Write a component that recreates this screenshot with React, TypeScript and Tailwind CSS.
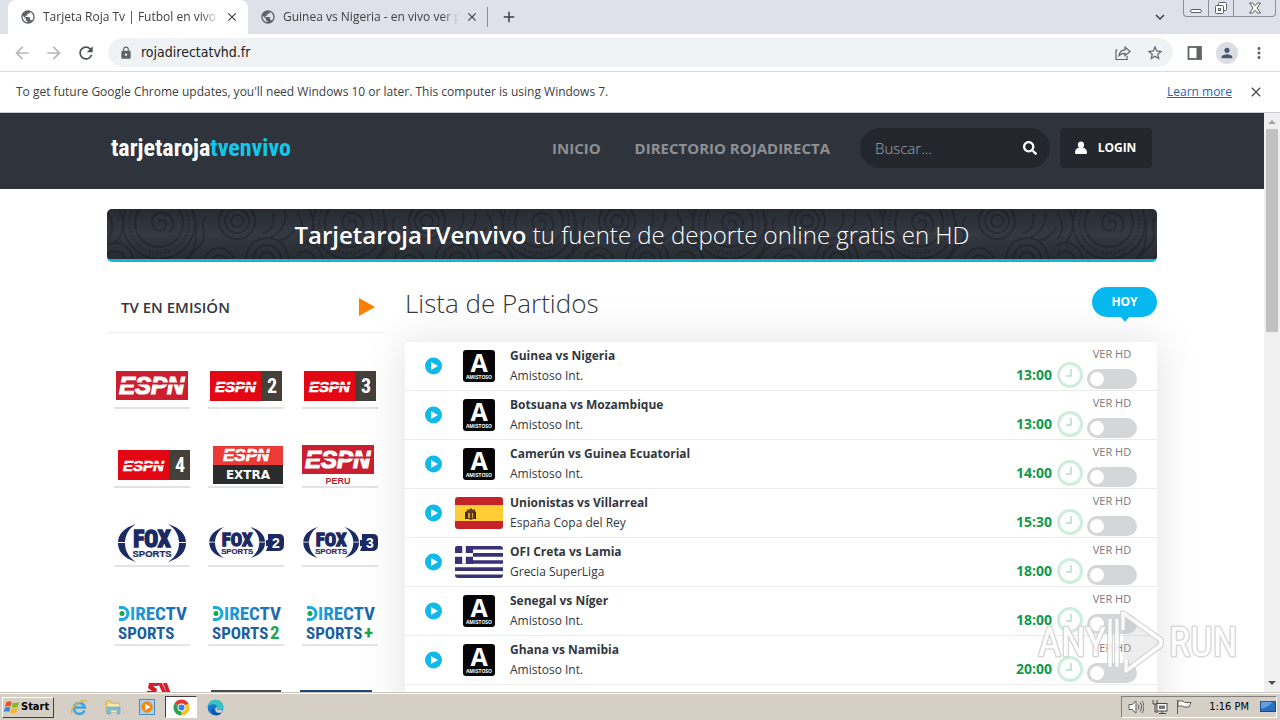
import React from "react";
import {
  MdPublic, MdClose, MdAdd, MdArrowBack, MdArrowForward, MdRefresh, MdLock,
  MdStarBorder, MdMoreVert, MdPerson, MdKeyboardArrowDown,
} from "react-icons/md";
import { FaSearch } from "react-icons/fa";

const UI = "font-['DejaVu_Sans_Condensed','Open_Sans',sans-serif]";
const CONDENSED = "Roboto Condensed, Liberation Sans Narrow, sans-serif";

function Tab({ title, active }: { title: string; active?: boolean }) {
  return (
    <div
      className={
        active
          ? "flex h-full w-[240px] items-center rounded-t-lg bg-white pr-2 pl-3"
          : "flex h-full w-[240px] items-center pr-2 pl-3"
      }
    >
      <MdPublic className="size-4 shrink-0 text-[#5f6368]" />
      <span className="ml-[7px] flex-1 overflow-hidden mask-r-from-90% font-['Open_Sans',sans-serif] text-[12px] whitespace-nowrap text-[#3c4043]">
        {title}
      </span>
      <button aria-label="Close tab" className="ml-[5px] flex size-4 items-center justify-center text-[#3c4043]">
        <MdClose className="size-[14px]" />
      </button>
    </div>
  );
}

function TabStrip() {
  return (
    <div className="flex h-[34px] shrink-0 bg-[#dee1e9]">
      <div className="flex items-center pl-2">
        <Tab title="Tarjeta Roja Tv | Futbol en vivo – Pirlo" active />
        <Tab title="Guinea vs Nigeria - en vivo ver partido" />
        <span className="-ml-px h-5 w-px bg-[#8a8d93]" />
        <button aria-label="New tab" className="ml-3 text-[#3c4043]">
          <MdAdd className="size-[18px]" />
        </button>
      </div>
      <div className="ml-auto flex items-start pr-1">
        <button aria-label="Search tabs" className="mt-2 mr-[14px] text-[#3c4043]">
          <MdKeyboardArrowDown className="size-[18px]" />
        </button>
        <div className="flex h-[17px] rounded-b border border-t-0 border-[#8b8e95] text-[#5b5f66]">
          <button aria-label="Minimize" className="flex w-[25px] items-end justify-center border-r border-[#8b8e95] pb-[3px]">
            <span className="h-1 w-3 rounded-xs border border-[#5b5f66] bg-white" />
          </button>
          <button aria-label="Restore" className="flex w-[25px] items-center justify-center border-r border-[#8b8e95]">
            <svg viewBox="0 0 14 14" className="size-[14px]" fill="#fff" stroke="#5b5f66">
              <rect x="4.500" y="1.500" width="8" height="8" rx="1" />
              <rect x="1.500" y="4.500" width="8" height="8" rx="1" />
              <rect x="4.500" y="7.500" width="2" height="2" />
            </svg>
          </button>
          <button aria-label="Close" className="flex w-[41px] items-center justify-center">
            <svg viewBox="0 0 14 12" className="h-3 w-[14px]" fill="#fff" stroke="#5b5f66">
              <path d="M1.500 1h3.200L7 3.800 9.300 1h3.200L9 6l3.500 5H9.300L7 8.200 4.700 11H1.500L5 6z" />
            </svg>
          </button>
        </div>
      </div>
    </div>
  );
}

function Toolbar() {
  return (
    <div className="flex h-[38px] shrink-0 items-center border-b border-[#d9dbdf] bg-white pr-3 pl-3">
      <button aria-label="Back" className="text-[#b4b6b9]"><MdArrowBack className="size-5" /></button>
      <button aria-label="Forward" className="ml-3 text-[#b4b6b9]"><MdArrowForward className="size-5" /></button>
      <button aria-label="Reload" className="ml-3 text-[#4c4f54]"><MdRefresh className="size-5" /></button>
      <div className="ml-3 flex h-[29px] flex-1 items-center rounded-full bg-[#f0f3f6] pr-[9px] pl-[11px]">
        <MdLock className="size-[14px] text-[#5f6368]" />
        <input
          aria-label="Address"
          defaultValue="rojadirectatvhd.fr"
          className="ml-2 flex-1 bg-transparent text-[14px] text-[#202124] outline-none"
        />
        <button aria-label="Share">
          <svg viewBox="0 0 18 18" className="size-[18px]" fill="none" stroke="#5f6368" strokeWidth="1.200">
            <path d="M3.500 6H2v9.500h11V12" />
            <path d="M5 11.500c.4-3.500 2.500-5.500 6-5.700V3l5 4.500-5 4.300V9.300c-2.600 0-4.500.6-6 2.200z" />
          </svg>
        </button>
        <button aria-label="Bookmark" className="ml-[14px] text-[#5f6368]"><MdStarBorder className="size-[18px]" /></button>
      </div>
      <button aria-label="Side panel" className="ml-[13px]">
        <svg viewBox="0 0 18 18" className="size-[18px]" fill="none" stroke="#5f6368" strokeWidth="1.800">
          <rect x="2.500" y="3" width="12.500" height="12" />
          <path d="M12.500 3v12" strokeWidth="4" />
        </svg>
      </button>
      <button aria-label="Profile" className="ml-3 flex size-[22px] items-center justify-center rounded-full bg-[#dadde2] text-[#4d5670]">
        <MdPerson className="size-4" />
      </button>
      <button aria-label="Menu" className="ml-3 text-[#5f6368]"><MdMoreVert className="size-[18px]" /></button>
    </div>
  );
}

function InfoBar() {
  return (
    <div className="flex h-[41px] shrink-0 items-center border-b border-[#c9ccd0] bg-white px-4 font-['Open_Sans',sans-serif] text-[12px] text-[#3c4043]">
      <p>To get future Google Chrome updates, you'll need Windows 10 or later. This computer is using Windows 7.</p>
      <a href="#learn" className="ml-auto text-[#1a66b8] underline">Learn more</a>
      <button aria-label="Dismiss" className="ml-4 text-[#4c4f54]"><MdClose className="size-4" /></button>
    </div>
  );
}

function SiteHeader() {
  return (
    <header className="border-t border-[#2a2f36] bg-[#2f333b]">
      <div className="mx-auto flex h-[75px] max-w-[1050px] items-center pr-[5px] pb-[7px] pl-1">
        <a href="#home" className="font-['Roboto_Condensed','Liberation_Sans_Narrow',sans-serif] text-[24px] leading-9 font-bold text-white">
          tarjetaroja<span className="text-[#0fc9ec]">tvenvivo</span>
        </a>
        <nav className="ml-auto flex gap-[34px] text-[15px] font-bold text-[#8d9095]">
          <a href="#inicio">INICIO</a>
          <a href="#directorio">DIRECTORIO ROJADIRECTA</a>
        </nav>
        <form className="ml-[30px] flex h-10 w-[190px] items-center rounded-full bg-[#23262d] pr-[13px] pl-[15px]">
          <input
            aria-label="Buscar"
            placeholder="Buscar..."
            className="w-0 flex-1 bg-transparent text-[15px] font-light text-white outline-none placeholder:text-[#a4a6aa]"
          />
          <button type="button" aria-label="Buscar partidos" className="text-white"><FaSearch className="size-[14px]" /></button>
        </form>
        <button className="ml-[10px] flex h-10 w-[92px] items-center justify-center gap-[10px] rounded bg-[#23262d] pr-[2px] text-[12px] font-bold text-white">
          <svg viewBox="0 0 14 14" className="size-[14px]" fill="currentColor">
            <path d="M7 .5c2 0 3.100 1.400 3.100 3.200 0 1.200-.5 2.300-1.200 3 2.600.5 4.100 2 4.100 4.800 0 1-.6 1.500-1.500 1.500h-9C1.600 13 1 12.500 1 11.500c0-2.800 1.500-4.300 4.100-4.800-.7-.7-1.200-1.800-1.200-3C3.900 1.900 5 .5 7 .5z" />
          </svg>
          LOGIN
        </button>
      </div>
    </header>
  );
}

function Swirls() {
  return (
    <svg className="absolute inset-0 size-full" aria-hidden="true">
      <defs>
        <pattern id="swirl" width="190" height="60" patternUnits="userSpaceOnUse">
          <g fill="none" stroke="#292d34" strokeWidth="2">
            <circle cx="52" cy="14" r="24" />
            <circle cx="52" cy="14" r="30" strokeDasharray="2 2" />
            <circle cx="52" cy="14" r="36" />
            <path d="M52 14c0-4 7-4 7 2s-10 8-13 1 2-15 11-13 12 13 6 19" />
            <circle cx="130" cy="12" r="6" />
            <circle cx="130" cy="12" r="12" />
            <circle cx="130" cy="12" r="18" />
            <circle cx="112" cy="54" r="8" />
            <circle cx="112" cy="54" r="15" />
            <circle cx="160" cy="50" r="7" />
            <circle cx="160" cy="50" r="14" />
            <circle cx="160" cy="50" r="21" />
            <circle cx="8" cy="52" r="10" />
            <circle cx="8" cy="52" r="18" />
            <path d="M0 30c8-8 6-18 0-26M8 34c10-10 10-24 4-34M82 52c0-8 10-12 14-20s-4-14 2-24M74 60c2-10 12-14 14-24s0-16 2-24M156 24c8-2 12-10 10-20M164 28c10-4 16-14 14-26M172 32c8-2 14-8 18-14" />
          </g>
        </pattern>
      </defs>
      <rect width="100%" height="100%" fill="url(#swirl)" />
    </svg>
  );
}

function Banner() {
  return (
    <div className="relative flex h-[53px] items-center justify-center overflow-hidden rounded-[5px] border-b-3 border-[#13b5e0] bg-[#343942]">
      <Swirls />
      <div className="absolute inset-0 bg-linear-to-b from-black/25 via-transparent to-black/25" />
      <h1 className="relative pt-px text-[24px] font-light text-white">
        <strong className="font-semibold">TarjetarojaTVenvivo</strong> tu fuente de deporte online gratis en HD
      </h1>
    </div>
  );
}

function EspnMark({ x, y, size, stripe }: { x: number; y: number; size: number; stripe: string }) {
  return (
    <g>
      <text x={x} y={y} fontSize={size} fontWeight="bold" fontStyle="italic" fill="#fff" stroke="#fff" strokeWidth={size > 20 ? 1.2 : 0.7} fontFamily="Liberation Sans, sans-serif">
        ESPN
      </text>
      <rect x={x - 1} y={y - size * 0.48} width={size * 2.9} height={size > 20 ? 2 : 1.3} fill={stripe} />
    </g>
  );
}

function EspnNumber({ n, dx }: { n: string; dx: number }) {
  return (
    <g transform={`translate(${dx} 0)`}>
      <rect x="2" y="22" width="52" height="30" fill="#e30613" />
      <rect x="53" y="22" width="21" height="30" fill="#46403b" />
      <EspnMark x={7} y={43} size={15} stripe="#e30613" />
      <text x="64" y="44" fontSize="20" fontWeight="bold" textAnchor="middle" fill="#fff" fontFamily={CONDENSED}>{n}</text>
    </g>
  );
}

function FoxMark({ n }: { n?: string }) {
  const mark = (
    <g>
      <g fill="#1b2a63">
        <path d="M22 17C9 21 4 28 4 36s5 15 18 19C14 50 11 43 11 36s3-14 11-19z" />
        <path d="M54 17c13 4 18 11 18 19s-5 15-18 19c8-5 11-12 11-19s-3-14-11-19z" />
      </g>
      <path d="M3 35.500h8M65 35.500h8" stroke="#fff" />
      <text x="38" y="40" fontSize="23" fontWeight="bold" textAnchor="middle" fill="#1b2a63" stroke="#1b2a63" strokeWidth="1.600" fontFamily={CONDENSED}>FOX</text>
      <text x="38" y="49.500" fontSize="9.500" fontWeight="bold" textAnchor="middle" fill="#1b2a63" stroke="#1b2a63" strokeWidth=".2" fontFamily="Liberation Sans, sans-serif">SPORTS</text>
    </g>
  );
  if (!n) return mark;
  return (
    <g>
      <g transform="translate(-2 6) scale(.82)">{mark}</g>
      <path d="M60 27h11q5 0 5 5v6q0 6-6 6H58l2-5h-2v-6h2z" fill="#1b2a63" />
      <text x="68" y="41" fontSize="14" fontWeight="bold" textAnchor="middle" fill="#fff" fontFamily="Liberation Sans, sans-serif">{n}</text>
    </g>
  );
}

function DirectvMark({ extra }: { extra?: string }) {
  return (
    <g fontFamily={CONDENSED} fontWeight="bold">
      <defs>
        <linearGradient id="dtv" x1="0" x2="1">
          <stop offset="0" stopColor="#16a5e0" />
          <stop offset="1" stopColor="#1c5fa8" />
        </linearGradient>
      </defs>
      <path d="M5 21.500h3a6 6 0 0 1 0 12H5" fill="none" stroke="#19a9e4" strokeWidth="3" />
      <circle cx="8" cy="27.500" r="2.500" fill="#1aa64a" />
      <text x="16" y="34" fontSize="19" fill="url(#dtv)">IRECTV</text>
      <text x="4" y="53" fontSize="17" fill="#1c5fa0">SPORTS</text>
      {extra && <text x="62" y="53" fontSize="19" fill="#1aa64a">{extra}</text>}
    </g>
  );
}

const channels: { name: string; art: React.ReactNode }[] = [
  { name: "ESPN", art: <g><rect x="2" y="22" width="72" height="29" fill="#cb1f30" /><EspnMark x={5} y={45} size={24} stripe="#cb1f30" /></g> },
  { name: "ESPN 2", art: <EspnNumber n="2" dx={0} /> },
  { name: "ESPN 3", art: <EspnNumber n="3" dx={0} /> },
  { name: "ESPN 4", art: <EspnNumber n="4" dx={2} /> },
  {
    name: "ESPN Extra",
    art: (
      <g>
        <rect x="5" y="18" width="70" height="19" fill="#ec3a36" />
        <rect x="5" y="37" width="70" height="19" fill="#2a2b2c" />
        <EspnMark x={15} y={33} size={17} stripe="#ec3a36" />
        <text x="40" y="51" fontSize="12" fontWeight="bold" textAnchor="middle" fill="#fff" fontFamily="DejaVu Sans, sans-serif">EXTRA</text>
      </g>
    ),
  },
  {
    name: "ESPN Peru",
    art: (
      <g>
        <rect x="0" y="17" width="72" height="29" fill="#cb1f30" />
        <EspnMark x={3} y={40} size={24} stripe="#cb1f30" />
        <text x="36" y="56" fontSize="9" fontWeight="bold" textAnchor="middle" fill="#b81f2d" fontFamily="Liberation Sans, sans-serif">PERU</text>
      </g>
    ),
  },
  { name: "Fox Sports", art: <FoxMark /> },
  { name: "Fox Sports 2", art: <FoxMark n="2" /> },
  { name: "Fox Sports 3", art: <FoxMark n="3" /> },
  { name: "DirecTV Sports", art: <DirectvMark /> },
  { name: "DirecTV Sports 2", art: <DirectvMark extra="2" /> },
  { name: "DirecTV Sports Plus", art: <DirectvMark extra="+" /> },
  { name: "Canal 13", art: <path d="M35 18h10l-1 3h-5l4 3-1 5h-10l1-3h5l-4-3zM44 18h4l5 11h-4zM49 18h4l4 11h-4zM32 28l3-3v4z" fill="#d81e2c" /> },
  { name: "Canal 14", art: <rect x="3" y="25" width="70" height="20" fill="#4a4d55" /> },
  { name: "Canal 15", art: <rect x="-2" y="25" width="72" height="20" fill="#243f86" /> },
];

function Sidebar() {
  return (
    <aside className="w-[276px] shrink-0">
      <div className="flex h-[51px] items-center justify-between border-b border-[#f0f0f0] pr-2 pl-[14px]">
        <h2 className="text-[15px] font-semibold text-[#33373d]">TV EN EMISIÓN</h2>
        <svg viewBox="0 0 16 18" className="h-[18px] w-4" fill="#ff7e00"><path d="M0 0l16 9-16 9z" /></svg>
      </div>
      <div className="mt-4 grid grid-cols-[repeat(3,76px)] gap-x-[18px] gap-y-[19px] pl-[7px]">
        {channels.map((c) => (
          <a key={c.name} href="#canal" aria-label={c.name} className="h-[60px] border-b-2 border-[#e2e3e4]">
            <svg viewBox="0 0 76 59" className="h-[59px] w-[76px] overflow-visible">{c.art}</svg>
          </a>
        ))}
      </div>
    </aside>
  );
}

type Kind = "am" | "es" | "gr";
const matches: { title: string; league: string; time: string; kind: Kind }[] = [
  { title: "Guinea vs Nigeria", league: "Amistoso Int.", time: "13:00", kind: "am" },
  { title: "Botsuana vs Mozambique", league: "Amistoso Int.", time: "13:00", kind: "am" },
  { title: "Camerún vs Guinea Ecuatorial", league: "Amistoso Int.", time: "14:00", kind: "am" },
  { title: "Unionistas vs Villarreal", league: "España Copa del Rey", time: "15:30", kind: "es" },
  { title: "OFI Creta vs Lamia", league: "Grecia SuperLiga", time: "18:00", kind: "gr" },
  { title: "Senegal vs Níger", league: "Amistoso Int.", time: "18:00", kind: "am" },
  { title: "Ghana vs Namibia", league: "Amistoso Int.", time: "20:00", kind: "am" },
];

function Badge({ kind }: { kind: Kind }) {
  if (kind === "am")
    return (
      <svg viewBox="0 0 32 32" className="size-8">
        <rect width="32" height="32" rx="3" fill="#050505" />
        <text x="16" y="22" fontSize="25" fontWeight="bold" textAnchor="middle" fill="#fff" fontFamily="Open Sans, sans-serif">A</text>
        <text x="16" y="29" fontSize="5" fontWeight="bold" textAnchor="middle" fill="#fff" fontFamily="Open Sans, sans-serif">AMISTOSO</text>
      </svg>
    );
  if (kind === "es")
    return (
      <svg viewBox="0 0 48 32" className="h-8 w-12 rounded-[3px]">
        <rect width="48" height="32" fill="#c62328" />
        <rect y="8" width="48" height="16" fill="#ffcd34" />
        <path d="M10 22v-7l2-1v-2l2 1 2-2 2 2 2-1v2l1 1v7h-3l-2 1-2-1z" fill="#5d3a1c" />
        <path d="M13 16h2v5h-2zM17 16h1v5h-1z" fill="#d89a2c" />
        <path d="M11 15v7M20.500 15v7" stroke="#2b2118" />
      </svg>
    );
  return (
    <svg viewBox="0 0 48 32" className="h-8 w-12 rounded-[3px]">
      <rect width="48" height="32" fill="#fff" />
      <path d="M0 1.800h48M0 8.900h48M0 16h48M0 23.100h48M0 30.200h48" stroke="#37317a" strokeWidth="3.600" />
      <rect width="18" height="17.800" fill="#37317a" />
      <path d="M9 0v17.800M0 8.900h18" stroke="#fff" strokeWidth="3.600" />
    </svg>
  );
}

function MatchRow({ title, league, time, kind, id }: (typeof matches)[number] & { id: string }) {
  return (
    <li className="flex h-[49px] items-center border-b border-[#ebebeb] pr-5 pl-5">
      <svg viewBox="0 0 18 18" className="size-[18px] shrink-0">
        <circle cx="8.500" cy="9" r="8.500" fill="#10b9e6" />
        <path d="M6 5l7 4-7 4z" fill="#fff" />
      </svg>
      <span className="ml-3 flex w-12 shrink-0 justify-center"><Badge kind={kind} /></span>
      <div className="ml-[7px] flex-1 text-[12px] leading-5 text-[#33373d]">
        <a href="#partido" className="block font-bold">{title}</a>
        <span className="block">{league}</span>
      </div>
      <time className="pt-[18px] text-[14px] leading-5 font-bold text-[#109a4c]">{time}</time>
      <svg viewBox="0 0 26 26" className="mt-[17px] ml-[5px] size-[26px]" fill="none">
        <circle cx="13" cy="13" r="11.500" stroke="#cdeedb" strokeWidth="3" />
        <path d="M14 7v7H9" stroke="#b5dcc6" strokeWidth="1.500" />
      </svg>
      <div className="ml-1 flex w-[50px] flex-col items-center pt-px">
        <label htmlFor={id} className="text-[11px] leading-5 text-[#77797d]">VER HD</label>
        <input
          id={id}
          type="checkbox"
          className="mt-[5px] h-5 w-[50px] appearance-none rounded-full bg-[#d5d6d7] before:mt-[3px] before:ml-[3px] before:block before:size-[14px] before:rounded-full before:bg-white"
        />
      </div>
    </li>
  );
}

function MatchList() {
  return (
    <section className="min-w-0 flex-1">
      <div className="flex h-[60px] items-start justify-between pt-[5px]">
        <h2 className="text-[26px] leading-8 font-light text-[#33373d]">Lista de Partidos</h2>
        <button className="relative h-[30px] w-[65px] rounded-full bg-[#06b8f0] text-[12px] font-bold text-white">
          HOY
          <span className="absolute top-[29px] left-[28px] border-x-5 border-t-6 border-x-transparent border-t-[#06b8f0]" />
        </button>
      </div>
      <ul className="rounded bg-white pb-12 shadow-[0_0_45px_rgba(0,0,0,0.12)]">
        {matches.map((m, i) => (
          <MatchRow key={m.title} {...m} id={`hd-${i}`} />
        ))}
      </ul>
    </section>
  );
}

function Watermark() {
  return (
    <svg viewBox="0 0 200 76" className="pointer-events-none absolute right-[42px] bottom-[10px] h-[76px] w-[200px]" fontFamily={CONDENSED}>
      <g opacity=".85" strokeLinejoin="round">
        <g stroke="#d2d3d4" strokeWidth="3" fill="none">
          <text x="0" y="50" fontSize="40">ANY</text>
          <text x="131" y="50" fontSize="40">RUN</text>
        </g>
        <g fill="#fff">
          <text x="0" y="50" fontSize="40">ANY</text>
          <text x="131" y="50" fontSize="40">RUN</text>
        </g>
        <path d="M85 6v60l38-30z" fill="#b9babb" fillOpacity=".3" />
        <path d="M85 24V7l38 27v5L88 65V54M72 13v48M79 13v48" fill="none" stroke="#cfd0d1" strokeWidth="6" />
        <path d="M85 24V7l38 27v5L88 65V54M72 13v48M79 13v48" fill="none" stroke="#fff" strokeWidth="3.500" />
      </g>
    </svg>
  );
}

function Scrollbar() {
  return (
    <div className="flex w-4 shrink-0 flex-col items-center bg-[#f0f0f0]">
      <svg viewBox="0 0 16 16" className="size-4" fill="#a3a3a3"><path d="M4 11l4-4 4 4z" /></svg>
      <div className="h-[35%] w-3 bg-[#c1c1c1]" />
      <svg viewBox="0 0 16 16" className="mt-auto size-4" fill="#505050"><path d="M4 5l4 4 4-4z" /></svg>
    </div>
  );
}

function Taskbar() {
  return (
    <footer className="flex h-7 shrink-0 items-center border-t border-[#c9c5be] bg-[#d5cfc6] pt-px pr-[3px] pl-[2px] shadow-[inset_0_1px_0_#fff]">
      <button className="flex h-[21px] w-[52px] items-center gap-px border border-t-white border-r-[#404040] border-b-[#404040] border-l-white pl-px text-[11px] font-bold text-black">
        <svg viewBox="0 0 16 16" className="size-4 shrink-0">
          <path d="M2 3.500C4 2 6 2 7.700 3L6.600 7.500C5 6.600 3 6.600 1 8z" fill="#e8542a" />
          <path d="M8.700 3.400c2 1 4 1 6.300-.4L14 7.500c-2 1.400-4 1.400-6.300.5z" fill="#7fba2c" />
          <path d="M.8 9C2.600 7.600 4.600 7.600 6.300 8.500L5.200 13C3.600 12 1.700 12-.2 13.400z" fill="#3b87d6" />
          <path d="M7.400 9c2 1 4 1 6.300-.4l-1.100 4.500c-2 1.400-4 1.400-6.300.4z" fill="#fbb91c" />
        </svg>
        Start
      </button>
      <div className="ml-[9px] flex items-center gap-[2px]">
        <button aria-label="Internet Explorer" className="flex h-[22px] w-8 items-center justify-center">
          <svg viewBox="0 0 18 18" className="size-[18px]" fill="none">
            <path d="M14.500 12.500A5.500 5.500 0 1 1 14.800 9.500H5" stroke="#3fa5e2" strokeWidth="2.600" />
            <path d="M2 15.500c-2-2 1-7 5.500-10S16.500 1 16.500 4" stroke="#e9b83a" strokeWidth="1.400" />
          </svg>
        </button>
        <button aria-label="Explorer" className="flex h-[22px] w-8 items-center justify-center">
          <svg viewBox="0 0 18 18" className="size-[18px]">
            <path d="M2 3h5l1 2h7v9H2z" fill="#f0d272" stroke="#c9a94b" strokeWidth=".6" />
            <path d="M4 6h11l1 8H3z" fill="#f8e9a6" />
            <path d="M3 9h13v7h-3v-4H6.500v4H3z" fill="#77bfe4" stroke="#4f9cc4" strokeWidth=".5" />
          </svg>
        </button>
        <button aria-label="Media Player" className="flex h-[22px] w-8 items-center justify-center">
          <svg viewBox="0 0 18 18" className="size-[18px]">
            <rect x="1.500" y="1.500" width="15" height="15" fill="#a8d2ee" stroke="#4a8cc0" />
            <circle cx="9" cy="9" r="5.800" fill="#f28a17" />
            <path d="M7.300 5.800L12.300 9l-5 3.200z" fill="#fff" />
          </svg>
        </button>
        <button aria-label="Chrome" className="flex h-[22px] w-8 items-center justify-center border border-t-[#404040] border-r-white border-b-white border-l-[#404040] bg-white">
          <svg viewBox="0 0 18 18" className="size-[17px]">
            <path d="M9 9L1.600 4.800A8.500 8.500 0 0 1 16.400 4.800z" fill="#e33b2e" />
            <path d="M9 9L16.400 4.800A8.500 8.500 0 0 1 9 17.500z" fill="#fcc31e" />
            <path d="M9 9v8.500A8.500 8.500 0 0 1 1.600 4.800z" fill="#2ba24c" />
            <circle cx="9" cy="9" r="4.200" fill="#fff" />
            <circle cx="9" cy="9" r="3.200" fill="#3b7de8" />
          </svg>
        </button>
        <button aria-label="Edge" className="flex h-[22px] w-8 items-center justify-center">
          <svg viewBox="0 0 18 18" className="size-[17px]">
            <circle cx="9" cy="9" r="8.300" fill="#1479cf" />
            <path d="M.8 8C1.500 3.500 5 .7 9 .7c4.800 0 8.300 3.300 8.300 7 0 2.500-1.800 4-4.300 4-2 0-3-.8-2.500-1.800C11.300 7.500 9.500 5.500 6.500 5.500 4 5.500 1.800 6.500.8 8z" fill="#38c4c0" />
            <path d="M6.500 9.500c0 3.500 3 6 7 5.500 1-.1 2-.5 2.500-.9C14 17 11 17.500 9 17.300 4.500 16 4 11 6.500 9.500z" fill="#0c4f9e" />
            <path d="M10.600 8.500c.5 1-.8 1.700 0 2.500 1 1 3.700 1 5.400-.2l-.2 3.300c-3 1.200-6.300.5-7-2.500-.3-1.500.5-2.700 1.800-3.100z" fill="#d5cfc6" />
          </svg>
        </button>
      </div>
      <div className="ml-auto flex h-[22px] w-[156px] items-center border border-t-[#808080] border-r-white border-b-white border-l-[#808080] pl-[6px] text-[11px] text-black">
        <svg viewBox="0 0 16 16" className="size-4" fill="#fff" stroke="#5e5c58">
          <path d="M1 5.500h3L8 2v12l-4-3.500H1z" />
          <path d="M10 5.500c1 1.500 1 3.500 0 5M12 3.500c2 2.500 2 6.500 0 9M14 2c2.500 3.500 2.500 8.500 0 12" fill="none" />
        </svg>
        <svg viewBox="0 0 16 16" className="ml-2 size-4" fill="#fff" stroke="#4a4845">
          <rect x="5" y="4.500" width="10" height="7.500" />
          <rect x="7" y="6.500" width="6" height="3.500" fill="#777" stroke="none" />
          <path d="M7 14.500h7M10 12v2M1 1v4h4V1M3 5v8h3" fill="none" />
        </svg>
        <svg viewBox="0 0 16 16" className="ml-2 size-4" fill="#fff" stroke="#5e5c58">
          <path d="M1.500 1v14M2 2h5l1.500 1.500H15L13 8H8L6.500 7H2z" />
        </svg>
        <span className="ml-auto">1:16 PM</span>
        <svg viewBox="0 0 18 14" className="ml-[11px] h-[14px] w-4">
          <rect x=".5" y="1" width="17" height="11" fill="#2b6fc4" stroke="#173f78" />
          <path d="M1 9c5-1 10-3 13-7.500H1z" fill="#5f9fe4" />
        </svg>
      </div>
    </footer>
  );
}

export default function App() {
  return (
    <div className={`flex h-screen flex-col overflow-hidden bg-white ${UI}`}>
      <TabStrip />
      <Toolbar />
      <InfoBar />
      <div className="relative flex min-h-0 flex-1">
        <div className="min-w-0 flex-1 overflow-hidden font-['Open_Sans',sans-serif]">
          <SiteHeader />
          <main className="mx-auto max-w-[1050px] pt-5">
            <Banner />
            <div className="mt-5 flex gap-[22px]">
              <Sidebar />
              <MatchList />
            </div>
          </main>
        </div>
        <Scrollbar />
        <Watermark />
      </div>
      <Taskbar />
    </div>
  );
}
